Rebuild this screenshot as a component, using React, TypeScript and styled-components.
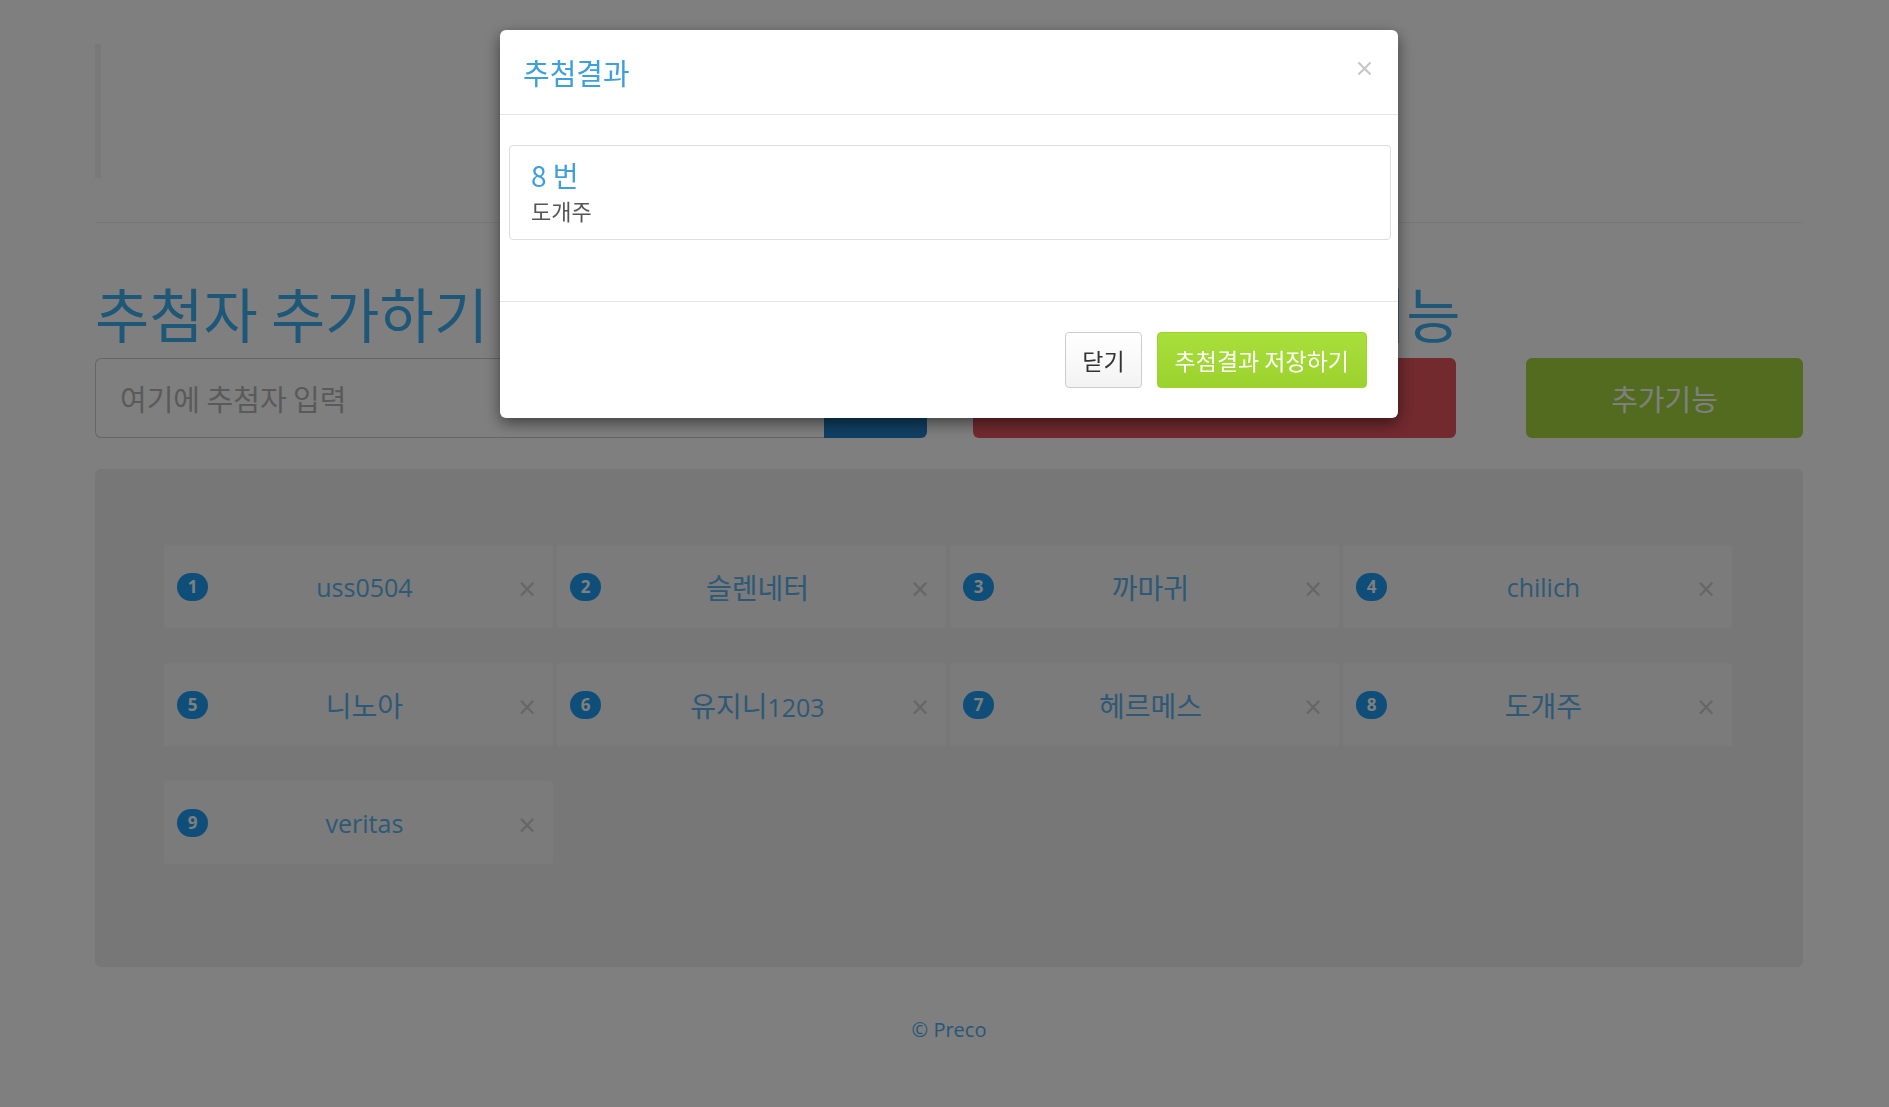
import React from "react";
import styled, { createGlobalStyle } from "styled-components";

const GlobalStyle = createGlobalStyle`
  html, body {
    margin: 0;
    padding: 0;
    background: #ffffff;
    font-family: "Open Sans", "Noto Sans CJK KR", sans-serif;
  }
  * {
    box-sizing: border-box;
  }
`;

const KR = `"Noto Sans CJK KR", "Open Sans", sans-serif`;

const Page = styled.div`
  min-height: 1107px;
  padding: 44px 86px 0 95px;
`;

const Quote = styled.blockquote`
  margin: 0;
  height: 134px;
  border-left: 6px solid #f2f2f2;
`;

const Rule = styled.hr`
  margin: 44px 0 0;
  border: 0;
  border-top: 1px solid #eeeeee;
`;

const TopRow = styled.div`
  display: flex;
  margin-top: 54px;
`;

const Column = styled.div<{ $width: number; $gap?: number }>`
  width: ${(p) => p.$width}px;
  margin-right: ${(p) => p.$gap ?? 0}px;
  flex-shrink: 0;
`;

const Heading = styled.h1`
  margin: 0 0 9px;
  font-family: ${KR};
  font-size: 59px;
  font-weight: 400;
  line-height: 72px;
  color: #3daeee;
  white-space: nowrap;
`;

const InputGroup = styled.div`
  display: flex;
  height: 80px;
`;

const NameInput = styled.input`
  flex: 1;
  height: 80px;
  padding: 0 24px;
  border: 1px solid #cccccc;
  border-right: 0;
  border-radius: 6px 0 0 6px;
  font-family: ${KR};
  font-size: 29px;
  color: #555;
  outline: none;
  &::placeholder {
    color: #b4b4b4;
  }
`;

const ActionButton = styled.button<{ $bg: string; $radius?: string }>`
  height: 80px;
  width: 100%;
  border: 0;
  border-radius: ${(p) => p.$radius ?? "6px"};
  background: ${(p) => p.$bg};
  color: #ffffff;
  font-family: ${KR};
  font-size: 29px;
  cursor: pointer;
`;

const AddButton = styled(ActionButton)`
  width: 103px;
  flex-shrink: 0;
`;

const Well = styled.div`
  margin-top: 31px;
  padding: 75px 68px 102px;
  background: #eeeeee;
  border-radius: 6px;
`;

const CardGrid = styled.div`
  display: grid;
  grid-template-columns: repeat(4, 391px);
  column-gap: 2px;
  row-gap: 33px;
`;

const PersonCard = styled.div`
  display: flex;
  align-items: center;
  height: 85px;
  padding: 0 16px 0 13px;
  background: #f6f6f6;
  border: 1px solid #f1f1f1;
  border-radius: 4px;
`;

const Badge = styled.span`
  display: inline-flex;
  align-items: center;
  justify-content: center;
  min-width: 31px;
  height: 28px;
  border-radius: 14px;
  background: #1c9cf0;
  color: #ffffff;
  font-family: "Open Sans", sans-serif;
  font-size: 17px;
  font-weight: 700;
  flex-shrink: 0;
`;

const PersonName = styled.span`
  flex: 1;
  text-align: center;
  font-family: "Open Sans", sans-serif;
  font-size: 25px;
  color: #5ab2ee;
  padding-left: 4px;
`;

const Hangul = styled.span`
  font-family: ${KR};
  font-size: 28px;
`;

const Remove = styled.span`
  font-family: "DejaVu Sans", sans-serif;
  font-size: 24px;
  color: #cccccc;
  margin-top: 4px;
  line-height: 1;
`;

const Footer = styled.footer`
  margin-top: 49px;
  text-align: center;
  font-family: "Open Sans", sans-serif;
  font-size: 20px;
  color: #4eaef0;
`;

/* modal */

const Backdrop = styled.div`
  position: fixed;
  inset: 0;
  background: rgba(0, 0, 0, 0.5);
  display: flex;
  justify-content: center;
  align-items: flex-start;
  padding: 30px 0 0 9px;
`;

const Dialog = styled.div`
  width: 898px;
  background: #ffffff;
  border-radius: 6px;
  box-shadow: 0 5px 15px rgba(0, 0, 0, 0.5);
`;

const DialogHeader = styled.div`
  display: flex;
  align-items: center;
  justify-content: space-between;
  height: 85px;
  padding: 0 26px 0 23px;
  border-bottom: 1px solid #e5e5e5;
`;

const DialogTitle = styled.h4`
  margin: 0;
  font-family: ${KR};
  font-size: 29px;
  font-weight: 400;
  color: #3d9fdc;
`;

const CloseButton = styled.button`
  display: flex;
  padding: 0;
  margin-top: -8px;
  border: 0;
  background: none;
  cursor: pointer;
`;

const DialogBody = styled.div`
  padding: 30px 7px 61px 9px;
`;

const ResultCard = styled.div`
  height: 95px;
  padding: 11px 21px 0;
  border: 1px solid #dddddd;
  border-radius: 4px;
`;

const ResultNumber = styled.div`
  font-family: ${KR};
  font-size: 28px;
  line-height: 36px;
  color: #3d9fdc;
`;

const ResultName = styled.div`
  margin-top: 3px;
  font-family: ${KR};
  font-size: 22px;
  line-height: 28px;
  color: #555555;
`;

const DialogFooter = styled.div`
  display: flex;
  justify-content: flex-end;
  gap: 15px;
  padding: 30px 31px 30px;
  border-top: 1px solid #e5e5e5;
`;

const FooterButton = styled.button<{ $primary?: boolean }>`
  height: 56px;
  padding: 0 ${(p) => (p.$primary ? 17 : 16)}px;
  border-radius: 4px;
  font-family: ${KR};
  font-size: 23px;
  cursor: pointer;
  color: ${(p) => (p.$primary ? "#ffffff" : "#333333")};
  border: 1px solid ${(p) => (p.$primary ? "#9dd230" : "#cccccc")};
  background: ${(p) =>
    p.$primary
      ? "linear-gradient(#a8df3a, #9cd22e)"
      : "linear-gradient(#ffffff, #f3f3f3)"};
`;

const people = [
  "uss0504",
  "슬렌네터",
  "까마귀",
  "chilich",
  "니노아",
  "유지니1203",
  "헤르메스",
  "도개주",
  "veritas",
];

// hangul is set a little larger than latin, as the original font does
function NameText({ text }: { text: string }) {
  const parts = text.match(/[\uac00-\ud7a3]+|[^\uac00-\ud7a3]+/g) ?? [];
  return (
    <>
      {parts.map((part, i) =>
        /[\uac00-\ud7a3]/.test(part) ? (
          <Hangul key={i}>{part}</Hangul>
        ) : (
          <React.Fragment key={i}>{part}</React.Fragment>
        )
      )}
    </>
  );
}

export default function App() {
  return (
    <>
      <GlobalStyle />
      <Page>
        <Quote />
        <Rule />
        <TopRow>
          <Column $width={832} $gap={46}>
            <Heading>추첨자 추가하기</Heading>
            <InputGroup>
              <NameInput placeholder="여기에 추첨자 입력" />
              <AddButton $bg="#1f7fc6" $radius="0 6px 6px 0">
                추가
              </AddButton>
            </InputGroup>
          </Column>
          <Column $width={483} $gap={70}>
            <Heading>추첨하기 &추가기능</Heading>
            <ActionButton $bg="#e4545e">추첨하기</ActionButton>
          </Column>
          <Column $width={277}>
            <Heading>&nbsp;</Heading>
            <ActionButton $bg="#a4d63c">추가기능</ActionButton>
          </Column>
        </TopRow>
        <Well>
          <CardGrid>
            {people.map((name, i) => (
              <PersonCard key={name}>
                <Badge>{i + 1}</Badge>
                <PersonName>
                  <NameText text={name} />
                </PersonName>
                <Remove>×</Remove>
              </PersonCard>
            ))}
          </CardGrid>
        </Well>
        <Footer>© Preco</Footer>
      </Page>

      <Backdrop>
        <Dialog>
          <DialogHeader>
            <DialogTitle>추첨결과</DialogTitle>
            <CloseButton aria-label="close">
              <svg width="15" height="15" viewBox="0 0 15 15">
                <path
                  d="M1.5 1.5 L13.5 13.5 M13.5 1.5 L1.5 13.5"
                  stroke="#c6c6c6"
                  strokeWidth="2"
                  fill="none"
                />
              </svg>
            </CloseButton>
          </DialogHeader>
          <DialogBody>
            <ResultCard>
              <ResultNumber>8 번</ResultNumber>
              <ResultName>도개주</ResultName>
            </ResultCard>
          </DialogBody>
          <DialogFooter>
            <FooterButton>닫기</FooterButton>
            <FooterButton $primary>추첨결과 저장하기</FooterButton>
          </DialogFooter>
        </Dialog>
      </Backdrop>
    </>
  );
}
